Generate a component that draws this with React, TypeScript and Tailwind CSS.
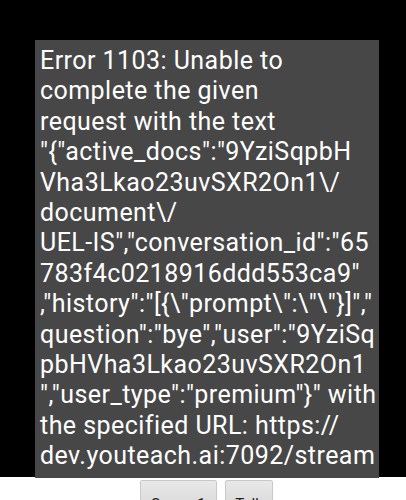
import React from "react";

const lines = [
  "Error 1103: Unable to",
  "complete the given",
  "request with the text",
  "\"{\"active_docs\":\"9YziSqpbH",
  "Vha3Lkao23uvSXR2On1\\/",
  "document\\/",
  "UEL-IS\",\"conversation_id\":\"65",
  "783f4c0218916ddd553ca9\"",
  ",\"history\":\"[{\\\"prompt\\\":\\\"\\\"}]\",\"",
  "question\":\"bye\",\"user\":\"9YziSq",
  "pbHVha3Lkao23uvSXR2On1",
  "\",\"user_type\":\"premium\"}\" with",
  "the specified URL: https://",
  "dev.youteach.ai:7092/stream",
];

export default function App() {
  return (
    <div className="relative w-[406px] h-[500px] overflow-hidden bg-white" style={{ fontFamily: "Roboto, 'Noto Sans', sans-serif" }}>
      <div className="h-[477px] bg-black" />
      <div className="flex justify-center gap-[8px] pt-[3px] pl-[7px]">
        <div className="w-[77px] h-[40px] rounded-[2px] bg-gradient-to-b from-[#e8e8e8] to-[#d4d4d4] border border-[#c8c8c8] flex justify-center pt-[12px] text-[15px] text-[#222]">
          Screen1
        </div>
        <div className="w-[48px] h-[40px] rounded-[2px] bg-gradient-to-b from-[#e8e8e8] to-[#d4d4d4] border border-[#c8c8c8] flex justify-center pt-[12px] text-[15px] text-[#222]">
          Talk
        </div>
      </div>
      <div className="absolute left-[35px] top-[40px] w-[344px] h-[438px] bg-[#474747] pl-[5px] pt-[6px] text-white text-[25px] leading-[30.4px] tracking-[0.45px]">
        {lines.map((l, i) => (
          <div key={i} className="whitespace-nowrap">{l}</div>
        ))}
      </div>
    </div>
  );
}
